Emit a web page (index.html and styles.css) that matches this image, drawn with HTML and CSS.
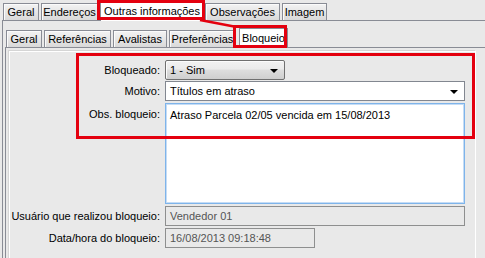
FILE: index.html
```html
<!DOCTYPE html>
<html lang="pt-BR">
<head>
  <meta charset="UTF-8">
  <title>Bloqueio</title>
  <link rel="stylesheet" href="styles.css">
</head>
<body>

  <div class="tab-row top">
    <div class="tab w-geral">Geral</div>
    <div class="tab w-end">Endereços</div>
    <div class="tab active w-outras">Outras informações</div>
    <div class="tab w-obs">Observações</div>
    <div class="tab w-img">Imagem</div>
  </div>

  <div class="panel outer">
    <div class="tab-row sub">
      <div class="tab w-geral2">Geral</div>
      <div class="tab w-ref">Referências</div>
      <div class="tab w-aval">Avalistas</div>
      <div class="tab w-pref">Preferências</div>
      <div class="tab active w-bloq">Bloqueio</div>
    </div>

    <div class="panel inner">
      <div class="group">
        <div class="form">
          <label class="row-bloq">Bloqueado:</label>
          <div class="combo button row-bloq">1 - Sim <span class="arrow"></span></div>

          <label class="row-mot">Motivo:</label>
          <div class="combo edit row-mot">Títulos em atraso <span class="arrow"></span></div>

          <label class="row-obs top">Obs. bloqueio:</label>
          <div class="memo row-obs">Atraso Parcela 02/05 vencida em 15/08/2013</div>

          <label class="row-usu">Usuário que realizou bloqueio:</label>
          <div class="field disabled row-usu">Vendedor 01</div>

          <label class="row-data">Data/hora do bloqueio:</label>
          <div class="field disabled short row-data">16/08/2013 09:18:48</div>
        </div>
      </div>
    </div>
  </div>

  <!-- marcações em vermelho por cima da tela -->
  <svg class="marks" width="485" height="258" viewBox="0 0 485 258">
    <rect x="98.5" y="1.5" width="105" height="17" />
    <line x1="200" y1="20" x2="234" y2="26.5" />
    <rect x="234.5" y="26.5" width="51" height="20" />
    <rect x="77.5" y="54.5" width="396" height="83" />
  </svg>

</body>
</html>
```

FILE: styles.css
```css
/* base */
body {
  margin: 0;
  width: 485px;
  height: 258px;
  overflow: hidden;
  position: relative;
  background-color: #e9e9e9;
  font-family: "Liberation Sans", Arial, sans-serif;
  font-size: 11px;
  color: #000;
}

/* abas */
.tab-row {
  display: flex;
  align-items: flex-end;
  gap: 2px;
  height: 20px;
  position: relative;
  z-index: 1;
}

.tab-row.top {
  padding-left: 3px;
}

.tab-row.sub {
  padding-left: 1px;
  height: 17px;
  margin-top: 9px;
}

.tab {
  box-sizing: border-box;
  height: 17px;
  line-height: 17px;
  border: 1px solid #898c95;
  border-bottom: none;
  background: linear-gradient(#f3f3f3, #e6e6e6 50%, #d9d9d9);
  box-shadow: inset 1px 1px 0 #fbfbfb;
  text-align: center;
  white-space: nowrap;
}

.tab.active {
  height: 20px;
  margin-bottom: -1px;
  background: #fff;
  box-shadow: none;
  line-height: 18px;
}

.w-geral { width: 36px; }
.w-end { width: 57px; }
.w-outras { width: 104px; margin: 0 -1px 0 0; }
.w-obs { width: 75px; }
.w-img { width: 45px; }

.w-geral2 { width: 36px; }
.w-ref { width: 67px; }
.w-aval { width: 54px; }
.w-pref { width: 67px; }
.w-bloq { width: 49px; margin-left: 1px; }

/* paineis */
.panel {
  border-top: 1px solid #898c95;
  border-left: 1px solid #898c95;
}

.panel.outer {
  margin-left: 2px;
  padding-left: 2px;
  height: 240px;
}

.panel.inner {
  padding: 2px 0 0 2px;
  height: 210px;
}

.group {
  width: 466px;
  height: 205px;
  border: 1px solid #d5d5d5;
  border-right-color: #fff;
  border-bottom-color: #fff;
  box-shadow: inset 1px 1px 0 #fff;
  padding-top: 9px;
}

/* formulario */
.form {
  display: grid;
  grid-template-columns: 151px auto;
  column-gap: 5px;
  align-items: center;
}

.form label {
  text-align: right;
}

.form label.top {
  align-self: start;
  padding-top: 5px;
}

.row-mot { margin-top: 1px; }
.row-obs { margin-top: 2px; }
.row-usu { margin-top: 2px; }
.row-data { margin-top: 2px; }

.combo, .field, .memo {
  box-sizing: border-box;
  height: 20px;
  line-height: 18px;
  padding-left: 4px;
  position: relative;
  white-space: nowrap;
}

.combo.button {
  width: 120px;
  border: 1px solid #707070;
  border-radius: 2px;
  background: linear-gradient(#f2f2f2, #ebebeb 45%, #dddddd 50%, #cfcfcf);
  box-shadow: inset 1px 1px 0 #fcfcfc;
}

.combo.edit {
  width: 300px;
  border: 1px solid #828790;
  background: #fff;
}

.arrow {
  position: absolute;
  top: 8px;
  right: 6px;
  width: 0;
  height: 0;
  border-left: 4px solid transparent;
  border-right: 4px solid transparent;
  border-top: 4px solid #000;
}

.memo {
  width: 300px;
  height: 101px;
  border: 1px solid #7eb4ea;
  box-shadow: inset 1px 1px 0 #c5dcf5, inset -1px -1px 0 #c5dcf5;
  background: #fff;
  padding-top: 2px;
}

.field.disabled {
  width: 300px;
  border: 1px solid #8e8f8f;
  background: #e9e9e9;
  color: #555;
}

.field.short {
  width: 150px;
}

/* marcacoes */
.marks {
  position: absolute;
  top: 0;
  left: 0;
  z-index: 5;
  pointer-events: none;
}

.marks rect, .marks line {
  fill: none;
  stroke: #e4000f;
  stroke-width: 3;
}

.marks line {
  stroke-width: 2.5;
}
```
